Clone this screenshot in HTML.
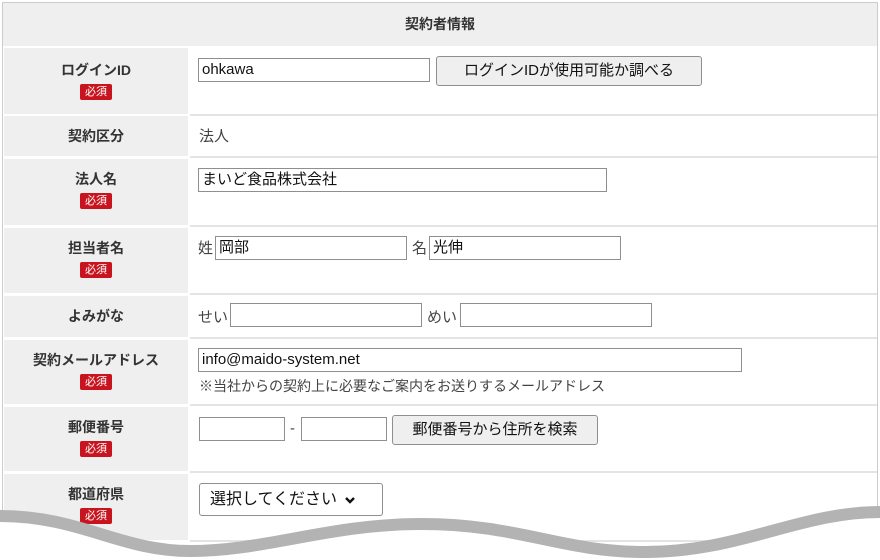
<!DOCTYPE html>
<html><head><meta charset="utf-8"><style>
*{margin:0;padding:0;box-sizing:border-box}
body{width:880px;height:560px;overflow:hidden;background:#fff;position:relative;font-family:"Liberation Sans","Noto Sans CJK JP",sans-serif;font-size:15px;color:#333}
.a{position:absolute}
.frame{left:2px;top:2px;width:876px;height:545px;border:1px solid #ccc;border-bottom:none}
.hd{left:3px;top:3px;width:874px;height:43px;background:#efefef;text-align:center;line-height:43px;font-weight:bold;font-size:14px;color:#333}
.lb{left:4px;width:184px;background:#efefef;text-align:center;font-weight:bold;font-size:14px;color:#333;padding-top:10px;line-height:20px}
.vl{left:190px;width:687px;background:#fff;border-bottom:2px solid #e4e4e4}
.req{display:inline-block;background:#c8141e;color:#fff;font-size:11px;font-weight:normal;line-height:16px;padding:0 5px;border-radius:2px;margin-top:3px}
.in{position:absolute;height:24px;border:1px solid #8f8f8f;background:#fff;font-size:15px;line-height:22px;padding-left:3px;color:#111}
.bt{position:absolute;height:30px;border:1px solid #8f8f8f;border-radius:3px;background:#efefef;font-size:15px;line-height:28px;text-align:center;color:#111}
.t{position:absolute;font-size:15px;color:#444}
</style></head><body>
<div class="a frame"></div>
<div class="a hd">契約者情報</div>

<div class="a lb" style="top:48px;height:66px;padding-top:12px">ログインID<br><span class="req">必須</span></div>
<div class="a vl" style="top:48px;height:68px"></div>
<div class="in" style="left:198px;top:58px;width:232px">ohkawa</div>
<div class="bt" style="left:436px;top:56px;width:266px">ログインIDが使用可能か調べる</div>

<div class="a lb" style="top:116px;height:40px">契約区分</div>
<div class="a vl" style="top:116px;height:42px"></div>
<div class="t" style="left:199px;top:125px">法人</div>

<div class="a lb" style="top:159px;height:66px">法人名<br><span class="req">必須</span></div>
<div class="a vl" style="top:159px;height:68px"></div>
<div class="in" style="left:198px;top:168px;width:409px">まいど食品株式会社</div>

<div class="a lb" style="top:228px;height:65px">担当者名<br><span class="req">必須</span></div>
<div class="a vl" style="top:228px;height:67px"></div>
<div class="t" style="left:198px;top:237px">姓</div>
<div class="in" style="left:215px;top:236px;width:192px">岡部</div>
<div class="t" style="left:412px;top:237px">名</div>
<div class="in" style="left:429px;top:236px;width:192px">光伸</div>

<div class="a lb" style="top:296px;height:41px">よみがな</div>
<div class="a vl" style="top:296px;height:43px"></div>
<div class="t" style="left:198px;top:306px">せい</div>
<div class="in" style="left:230px;top:303px;width:192px"></div>
<div class="t" style="left:427px;top:306px">めい</div>
<div class="in" style="left:460px;top:303px;width:192px"></div>

<div class="a lb" style="top:340px;height:64px">契約メールアドレス<br><span class="req">必須</span></div>
<div class="a vl" style="top:340px;height:66px"></div>
<div class="in" style="left:198px;top:348px;width:544px">info@maido-system.net</div>
<div class="t" style="left:199px;top:376px;font-size:14px">※当社からの契約上に必要なご案内をお送りするメールアドレス</div>

<div class="a lb" style="top:407px;height:64px">郵便番号<br><span class="req">必須</span></div>
<div class="a vl" style="top:407px;height:66px"></div>
<div class="in" style="left:199px;top:417px;width:86px"></div>
<div class="t" style="left:290px;top:420px">-</div>
<div class="in" style="left:301px;top:417px;width:86px"></div>
<div class="bt" style="left:392px;top:415px;width:206px">郵便番号から住所を検索</div>

<div class="a lb" style="top:474px;height:66px;padding-top:10px">都道府県<br><span class="req">必須</span></div>
<div class="a vl" style="top:474px;height:68px"></div>
<div class="in" style="left:199px;top:483px;width:184px;height:33px;border-radius:3px;line-height:31px;padding-left:10px;font-size:16px">選択してください <svg width="12" height="10" viewBox="0 0 12 10" style="vertical-align:middle;margin-left:2px"><path d="M2 3 L6 7 L10 3" fill="none" stroke="#111" stroke-width="2.4"/></svg></div>

<svg class="a" style="left:0;top:0" width="880" height="560" viewBox="0 0 880 560">
<path d="M0 516 C80 516 120 551 190 551 C265 551 330 524 421 524 C520 524 560 552 645 552 C740 552 800 512 880 512 L880 560 L0 560 Z" fill="#fff"/>
<path d="M0 516 C80 516 120 551 190 551 C265 551 330 524 421 524 C520 524 560 552 645 552 C740 552 800 512 880 512" fill="none" stroke="#b3b3b3" stroke-width="12"/>
</svg>
</body></html>
